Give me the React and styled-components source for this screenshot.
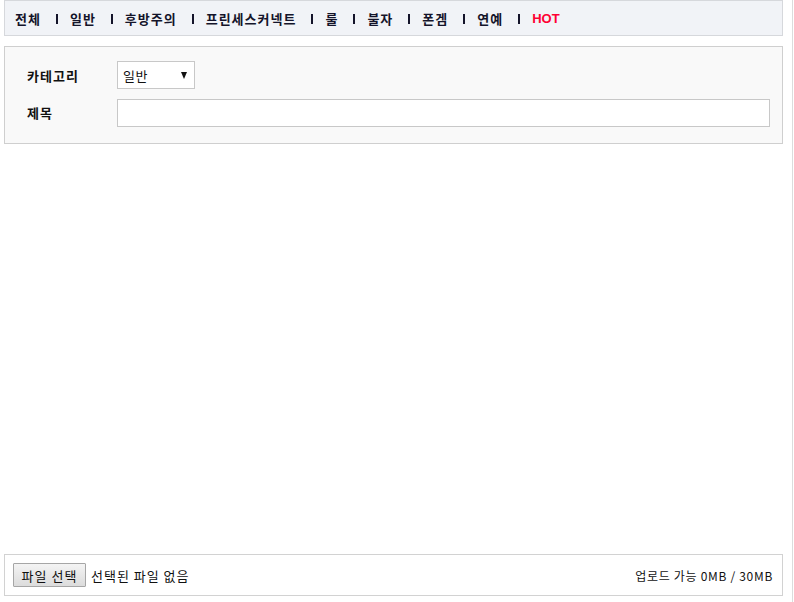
import React from "react";
import styled, { createGlobalStyle } from "styled-components";

const GlobalStyle = createGlobalStyle`
  html, body {
    margin: 0;
    padding: 0;
    background: #fff;
  }
  body {
    font-family: "Noto Sans CJK KR", "Liberation Sans", sans-serif;
    color: #111;
  }
`;

const Page = styled.div`
  width: 788px;
  height: 602px;
  padding-left: 4px;
  border-right: 1px solid #dcdcdc;
  display: flex;
  flex-direction: column;
`;

const Content = styled.div`
  width: 779px;
  display: flex;
  flex-direction: column;
`;

const CategoryBar = styled.nav`
  height: 34px;
  border: 1px solid #d6d8dc;
  background: #f1f3f7;
  display: flex;
  align-items: center;
  padding-left: 10px;
`;

const NavItem = styled.a`
  font-size: 13px;
  font-weight: 700;
  line-height: 1;
  letter-spacing: ${(p) => (p.hot ? "0" : "1px")};
  color: ${(p) => (p.hot ? "#ff0033" : "#14142a")};
  font-family: ${(p) =>
    p.hot ? '"Liberation Sans", Arial, sans-serif' : "inherit"};
  text-decoration: none;
  white-space: nowrap;
`;

const Divider = styled.span`
  width: 2px;
  height: 10px;
  background: #14142a;
  margin: 1px 12px 0 15px;
`;

const FormPanel = styled.section`
  margin-top: 10px;
  border: 1px solid #cfcfcf;
  background: #f9f9f9;
  padding: 14px 12px 16px 22px;
  display: flex;
  flex-direction: column;
  gap: 10px;
`;

const Row = styled.div`
  display: flex;
  align-items: center;
`;

const Label = styled.label`
  width: 90px;
  font-size: 13px;
  font-weight: 700;
  letter-spacing: 1px;
  color: #111;
  margin-top: ${(p) => (p.nudge ? "-2px" : "0")};
`;

const SelectBox = styled.div`
  width: 78px;
  height: 28px;
  box-sizing: border-box;
  border: 1px solid #c8c8c8;
  background: #fff;
  display: flex;
  align-items: center;
  justify-content: space-between;
  padding: 0 7px 0 5px;
  font-size: 13px;
  letter-spacing: 0.5px;
  color: #111;
`;

const Arrow = styled.span`
  width: 0;
  height: 0;
  border-left: 3px solid transparent;
  border-right: 3px solid transparent;
  border-top: 7px solid #111;
  margin-top: 1px;
`;

const TextInput = styled.input`
  flex: 1;
  height: 28px;
  box-sizing: border-box;
  border: 1px solid #c8c8c8;
  background: #fff;
  outline: none;
  padding: 0 6px;
  font-size: 13px;
  font-family: inherit;
`;

const EditorSpace = styled.div`
  height: 410px;
`;

const UploadBar = styled.div`
  height: 40px;
  border: 1px solid #d2d2d2;
  background: #fff;
  display: flex;
  align-items: center;
  justify-content: space-between;
  padding: 0 9px 0 8px;
`;

const FilePick = styled.div`
  display: flex;
  align-items: center;
  gap: 5px;
  font-size: 13px;
  letter-spacing: 1px;
  color: #111;
`;

const FileButton = styled.button`
  height: 24px;
  width: 73px;
  padding: 0;
  border: 1px solid #a6a6a6;
  border-radius: 1px;
  background: linear-gradient(#f4f4f4, #dcdcdc);
  font-family: inherit;
  font-size: 13px;
  letter-spacing: 1px;
  color: #111;
`;

const Quota = styled.span`
  font-size: 12px;
  letter-spacing: 0.7px;
  color: #111;
  margin-top: 1px;
`;

const categories = ["전체", "일반", "후방주의", "프린세스커넥트", "룰", "불자", "폰겜", "연예"];

export default function App() {
  return (
    <>
      <GlobalStyle />
      <Page>
        <Content>
          <CategoryBar>
            {categories.map((c) => (
              <React.Fragment key={c}>
                <NavItem href="#">{c}</NavItem>
                <Divider />
              </React.Fragment>
            ))}
            <NavItem href="#" hot>
              HOT
            </NavItem>
          </CategoryBar>

          <FormPanel>
            <Row>
              <Label>카테고리</Label>
              <SelectBox>
                <span>일반</span>
                <Arrow />
              </SelectBox>
            </Row>
            <Row>
              <Label nudge>제목</Label>
              <TextInput type="text" />
            </Row>
          </FormPanel>

          <EditorSpace />

          <UploadBar>
            <FilePick>
              <FileButton>파일 선택</FileButton>
              <span>선택된 파일 없음</span>
            </FilePick>
            <Quota>업로드 가능 0MB / 30MB</Quota>
          </UploadBar>
        </Content>
      </Page>
    </>
  );
}
